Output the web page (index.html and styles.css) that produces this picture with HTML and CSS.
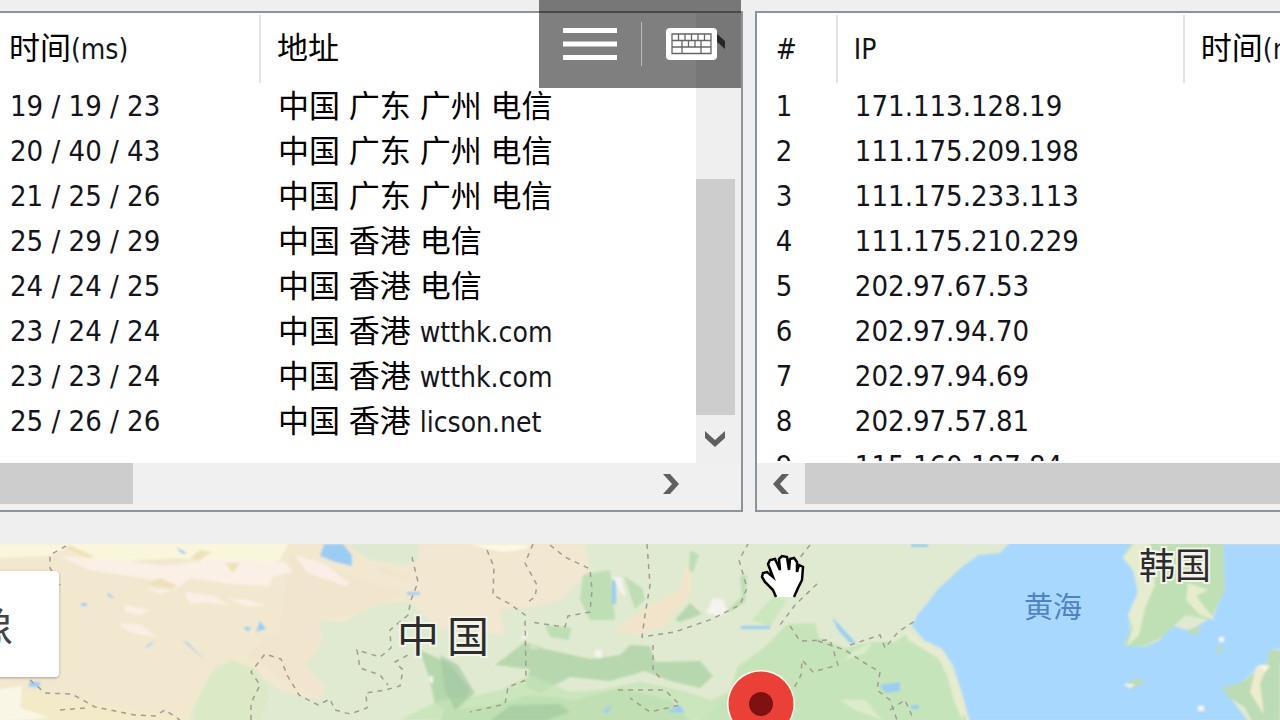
FILE: index.html
```html
<!DOCTYPE html>
<html lang="zh-CN">
<head>
<meta charset="utf-8">
<title>路由追踪</title>
<link rel="stylesheet" href="styles.css">
</head>
<body>
<main class="app">
  <div class="panes">
    <section class="pane pane-left">
      <div class="body">
        <div class="view">
          <table class="list">
            <colgroup><col class="c-time"><col></colgroup>
            <thead><tr><th><span class="cjk">时间</span>(ms)</th><th><span class="cjk">地址</span></th></tr></thead>
            <tbody>
              <tr><td>19 / 19 / 23</td><td class="addr">中国 广东 广州 电信</td></tr>
              <tr><td>20 / 40 / 43</td><td class="addr">中国 广东 广州 电信</td></tr>
              <tr><td>21 / 25 / 26</td><td class="addr">中国 广东 广州 电信</td></tr>
              <tr><td>25 / 29 / 29</td><td class="addr">中国 香港 电信</td></tr>
              <tr><td>24 / 24 / 25</td><td class="addr">中国 香港 电信</td></tr>
              <tr><td>23 / 24 / 24</td><td class="addr">中国 香港 <span class="host">wtthk.com</span></td></tr>
              <tr><td>23 / 23 / 24</td><td class="addr">中国 香港 <span class="host">wtthk.com</span></td></tr>
              <tr><td>25 / 26 / 26</td><td class="addr">中国 香港 <span class="host">licson.net</span></td></tr>
            </tbody>
          </table>
        </div>
        <div class="vbar">
          <button class="step" aria-label="向上"><svg width="20" height="18" viewBox="0 0 20 18"><path d="M0 17V9L10 0 20 9V17L10 8Z" fill="#505050"/></svg></button>
          <div class="vthumb"></div>
          <button class="step" aria-label="向下"><svg width="20" height="18" viewBox="0 0 20 18"><path d="M0 1L10 10 20 1V8L10 17 0 8Z" fill="#606060"/></svg></button>
        </div>
      </div>
      <div class="hbar">
        <div class="hthumb short"></div>
        <button class="step end" aria-label="向右"><svg width="18" height="20" viewBox="0 0 18 20"><path d="M1 0H8L17 10 8 20H1L10 10Z" fill="#606060"/></svg></button>
      </div>
      <div class="remote">
        <button class="tool" aria-label="菜单"><svg width="54" height="32" viewBox="0 0 54 32"><path d="M0 0H54V5H0ZM0 13.500H54V18.500H0ZM0 27H54V32H0Z" fill="#fff"/></svg></button>
        <span class="divider"></span>
        <button class="tool" aria-label="键盘"><svg width="51" height="32" viewBox="0 0 51 32"><rect width="51" height="32" rx="4" fill="#fff"/><path d="M6 6H45V25.500H6ZM6 12.500H45M6 19H45M12.500 6V12.500M19 6V12.500M25.500 6V12.500M32 6V12.500M38.500 6V12.500M16 12.500V19M22.500 12.500V19M29 12.500V19M35 12.500V19M16 19V25.500M35 19V25.500" fill="none" stroke="#666" stroke-width="1.300"/></svg></button>
      </div>
    </section>
    <section class="pane pane-right">
      <div class="body">
        <div class="view">
          <table class="list hops">
            <colgroup><col class="c-num"><col class="c-ip"><col></colgroup>
            <thead><tr><th>#</th><th>IP</th><th><span class="cjk">时间</span>(ms)</th></tr></thead>
            <tbody>
              <tr><td>1</td><td>171.113.128.19</td><td></td></tr>
              <tr><td>2</td><td>111.175.209.198</td><td></td></tr>
              <tr><td>3</td><td>111.175.233.113</td><td></td></tr>
              <tr><td>4</td><td>111.175.210.229</td><td></td></tr>
              <tr><td>5</td><td>202.97.67.53</td><td></td></tr>
              <tr><td>6</td><td>202.97.94.70</td><td></td></tr>
              <tr><td>7</td><td>202.97.94.69</td><td></td></tr>
              <tr><td>8</td><td>202.97.57.81</td><td></td></tr>
              <tr><td>9</td><td>115.160.187.84</td><td></td></tr>
            </tbody>
          </table>
        </div>
      </div>
      <div class="hbar">
        <button class="step start" aria-label="向左"><svg width="18" height="20" viewBox="0 0 18 20"><path d="M17 0H10L1 10 10 20H17L8 10Z" fill="#606060"/></svg></button>
        <div class="hthumb"></div>
      </div>
    </section>
  </div>
  <section class="map">
    <svg class="terrain" viewBox="0 544 1280 176" preserveAspectRatio="xMinYMin slice" role="img" aria-label="地图">
      <defs>
        <filter id="soft" x="-5%" y="-5%" width="110%" height="110%"><feGaussianBlur stdDeviation="1"/></filter>
      </defs>
      <rect y="544" width="1280" height="176" fill="#e0ead0"/>
      <g filter="url(#soft)">
        <path d="M-5 540H350L390 562 420 585 415 600 370 605 345 622 318 620 322 640 305 665 326 690 318 700 280 690 250 670 215 665 210 690 195 705 185 725H-5Z" fill="#f1e8cf"/>
        <path d="M290 555L350 575 400 590 385 602 350 615 318 618 320 645 305 665 326 688 318 698 290 685 262 665 245 655 280 630Z" fill="#f2e5cd"/>
        <path d="M60 540H290L280 560 240 568 180 558 100 562 70 552ZM-5 544H75L50 556-5 558Z" fill="#faf6dc"/>
        <path d="M60 556L120 560 165 566 220 559 285 562 293 572 272 577 270 586 230 584 190 578 175 590 155 580 90 570Z" fill="#fbf0e6"/>
        <path d="M295 555L325 564 350 584 345 586 308 573ZM125 605L150 610 140 615 125 612ZM118 624L140 624 156 637 130 632ZM185 592L215 596 230 606 205 602 190 604ZM228 598L250 600 265 606 245 606ZM145 588L175 590 160 594Z" fill="#fbefe5"/>
        <path d="M70 545L95 557 88 558 65 549ZM200 550L212 552 198 561 190 558ZM225 563H240L233 573ZM160 578L178 586 172 589 145 584Z" fill="#eee2bb"/>
        <path d="M20 690L75 700 200 720H0V705Z" fill="#f3ebc8"/>
        <path d="M-5 690L22 686 20 708 50 718-5 722Z" fill="#faf6e6"/>
        <path d="M210 675L230 660 255 668 270 690 260 725H195V704Z" fill="#dce9c7"/>
        <path d="M390 544H585L590 570 560 600 530 607 500 610 505 635 440 628 418 610 400 590Z" fill="#f2e7d0"/>
        <path d="M470 544H530L525 549 505 552 488 549Z" fill="#fdf8e2"/>
        <path d="M380 567L405 575 412 580 380 573ZM615 630L650 605 680 590 685 570 692 560 690 595 665 625 640 635Z" fill="#f2e4ca"/>
        <path d="M345 544H418V560L405 565 370 560Z" fill="#deead0"/>
        <path d="M583 575L610 570 615 620 590 620 580 600ZM624 576L642 588 645 600 635 609ZM690 550L699 555 693 573 689 570ZM728 610L742 596 740 576 747 575 745 602 730 612ZM545 625L572 628 568 640 550 637Z" fill="#bedeb5"/>
        <path d="M675 620L690 603 702 614 680 622ZM495 665L525 642 545 649 590 659 620 655 630 645 650 646 655 662 700 661 713 676 700 688 670 681 645 671 610 681 570 677 540 693 525 686 530 669Z" fill="#b7d8ae"/>
        <path d="M420 650L450 664 470 690 455 715 435 704 430 680ZM445 710L490 706 530 695 575 700 620 688 670 700 690 721H440Z" fill="#b5d7ad"/>
        <path d="M500 690L530 675 570 692 600 690 640 682 680 690 710 700 735 690 740 720H400L440 700 470 697Z" fill="#c4e3b6" opacity=".75"/>
        <path d="M440 655L458 665 475 693 455 710 445 690ZM510 705L560 704 570 712 545 721H490Z" fill="#a1c8a0" opacity=".65"/>
        <path d="M730 690L738 666 765 647 787 624 815 623 819 638 845 648 872 642 895 642 905 635 940 650 955 690 967 721H700Z" fill="#c6e4ba"/>
        <path d="M752 620L774 596 787 600 770 627Z" fill="#cbe7bd"/>
        <path d="M838 665L855 650 873 642 865 653 845 660ZM840 700H865L882 720 855 710Z" fill="#dceccb"/>
        <path d="M906 629L918 640 942 648 950 667 956 681 965 710 962 720 954 700 947 675 938 658 908 640Z" fill="#e6eccf"/>
        <path d="M1011 542H1132L1123 557 1133 570 1137 590 1138 600 1129 620 1130 635 1124 645 1145 647 1160 640 1170 625 1190 631 1205 621 1213 617 1224 590 1223 544H1285V648L1270 650 1267 662 1252 673 1242 682 1222 688 1230 697 1238 708 1248 721H970L963 696 953 665 942 649 924 640 912 626 918 614 926 605 938 589 948 580 963 566 979 555 1000 553Z" fill="#a9d8ff"/>
        <path d="M1132 542H1223L1225 590 1210 620 1186 615 1162 637 1145 646 1124 646 1131 628 1128 615 1140 588 1133 570 1123 558Z" fill="#bfe0b5"/>
        <path d="M1135 542H1150L1153 562 1155 585 1145 608 1139 635 1127 646 1133 628 1128 615 1140 588 1133 570 1123 558ZM1188 583L1208 590 1196 596 1215 620 1200 615 1186 600Z" fill="#e5edce"/>
        <path d="M1267 662L1280 655V721H1252L1245 707 1228 697 1222 688 1244 681ZM1268 650H1285V662H1268ZM1188 630L1200 626V634H1190ZM1123 685L1138 678 1145 682 1135 688ZM1215 652L1222 640 1220 654Z" fill="#bcdcb5"/>
        <path d="M1256 667L1268 664 1260 684 1264 715 1250 692Z" fill="#eeebcf"/>
        <path d="M1258 665L1270 666 1265 672ZM1219 637H1224V642H1219ZM1123 684H1135L1130 688ZM1198 706H1204V711H1198Z" fill="#faf4e9"/>
        <path d="M324 544H343L352 555V566L335 562 320 556ZM176 547L187 553 182 554ZM243 627H251L248 632ZM260 621L266 629 256 632ZM144 648L155 640 150 646ZM182 640L188 643 206 661ZM407 592H420V595H407ZM741 626H770V629H741ZM612 580H616V604H612ZM832 617L856 643H850L838 630ZM880 685L900 682V691L885 693ZM911 705H919V709H911ZM29 682H40V687H29ZM667 712L680 705 685 713ZM602 711L612 705 608 713ZM81 603H87V606H81ZM107 592L115 598 109 597ZM911 544H928V547H911Z" fill="#9bcdf3"/>
        <path d="M613 577H621L626 597 620 592ZM706 613L713 598 724 600 727 611 720 616ZM520 641L526 630 528 637ZM528 645L540 649 532 648ZM595 650H602V658H595ZM430 676H433V684L429 680Z" fill="#f4f3ed"/>
      </g>
      <g fill="none" stroke="#a39c90" stroke-width="1.500" stroke-dasharray="5 5">
        <path d="M66 546L50 555 50 568 60 585M30 680L45 693 72 694 95 707 135 715 155 716 165 710 180 720M251 720V703L260 685 251 672 265 654 281 659 287 675 299 695 318 705 330 699 335 710 350 714 367 708 366 693 385 690 400 686 403 670 395 662 408 655M412 557L418 582 411 600 408 615 390 630 391 648 380 657 357 650 360 668 380 675 388 685"/>
        <path d="M487 550L494 567 493 595 510 604 525 615 526 680 508 687 505 704 470 712M533 544L525 563 537 585 535 597 525 604M550 545L565 557 590 569 592 590 590 612 568 616 565 627 530 622M647 544L650 585 645 615 642 637 675 632 712 619 740 605 747 588 739 560 748 544M653 645V670L662 680M618 690L665 690 680 705 650 712 630 698"/>
        <path d="M810 545L798 560M817 584L795 605 780 625M790 626L800 641 830 640 838 665 813 672 802 660 801 675 793 690M818 641L845 650 863 662 880 672 877 690 890 700 897 720M850 645L880 635 885 648 898 632 915 621M60 710L85 708M890 710L905 700 912 716"/>
      </g>
      <g class="country">
        <text x="397" y="652" font-size="42">中</text>
        <text x="447" y="652" font-size="42">国</text>
        <text x="1139" y="579" font-size="36">韩国</text>
      </g>
      <text class="sea" x="1024" y="618" font-size="29">黄海</text>
      <circle cx="761" cy="704" r="34" fill="#fff8ee"/>
      <circle cx="761" cy="704" r="32.500" fill="#ea4038"/>
      <circle cx="761" cy="704" r="12" fill="#7f1210"/>
      <path d="M776 597L773 590 765 582 762 577 763 573 767 572 773 577 768 564 770 560 775 559 780 570 779 559 782 556 787 557 789 570 790 559 794 558 797 562V572L799 565 803 567 802 580 798 588 796 597Z" fill="#fff"/>
      <path d="M776 597L773 590 765 582 762 577 763 573 767 572 773 577 768 564 770 560 775 559 780 570 779 559 782 556 787 557 789 570 790 559 794 558 797 562V572L799 565 803 567 802 580 798 588 794 597" fill="none" stroke="#000" stroke-width="2.500"/>
    </svg>
    <button class="layer">像</button>
  </section>
</main>
</body>
</html>
```

FILE: styles.css
```css
* { box-sizing: border-box; }

body {
  margin: 0;
  background: #efefef;
  color: #14141c;
  font: 28px/45px "DejaVu Sans Condensed", "Noto Sans CJK SC", sans-serif;
}

button {
  display: flex;
  align-items: center;
  justify-content: center;
  margin: 0;
  padding: 0;
  border: 0;
  background: transparent;
}

.app {
  display: flex;
  flex-direction: column;
  min-height: 100vh;
  overflow: hidden;
}

.panes {
  position: relative;
  display: grid;
  grid-template-columns: 58fr 41fr;
  gap: 12px;
  padding: 11px 0 32px;
}

.pane {
  display: flex;
  flex-direction: column;
  min-width: 0;
  border: 2px solid #8b939b;
  background: #fff;
}

.pane-left { position: relative; border-left: 0; }
.pane-right { border-right: 0; }

.body { display: flex; height: 450px; }
.view { flex: 1; min-width: 0; padding-top: 2px; overflow: hidden; }
.pane-right .view { margin-bottom: 2px; }

.list {
  width: 100%;
  table-layout: fixed;
  border-collapse: separate;
  border-spacing: 0;
}

.c-time { width: 261px; }
.c-num { width: 81px; }
.c-ip { width: 347px; }

th {
  height: 68px;
  padding: 0 0 0 16px;
  border-right: 2px solid #e4e4e4;
  font-weight: 400;
  text-align: left;
  white-space: nowrap;
}

th:last-child { border-right: 0; }
th:first-child { padding-left: 9px; }

td {
  height: 45px;
  padding: 0 0 0 17px;
  font-size: 29px;
  line-height: 44px;
  white-space: nowrap;
}

td:first-child { padding-left: 10px; }
.hops th:first-child, .hops td:first-child { padding-left: 19px; }

.cjk, .addr {
  color: #000;
  font-size: 31px;
}

.host {
  color: #14141c;
  font-size: 28px;
  line-height: 1;
}

.vbar {
  display: flex;
  flex-direction: column;
  width: 45px;
  padding-right: 6px;
  background: #efefef;
}

.vbar .step { height: 48px; }
.vbar .step:first-child { height: 56px; }
.vthumb { flex: 1; margin-top: 110px; background: #cdcdcd; }

.hbar {
  display: flex;
  height: 47px;
  padding-bottom: 6px;
  background: #f0f0f0;
}

.hthumb { flex: 1; background: #cdcdcd; }
.hthumb.short { flex: none; width: 18%; }
.step.end { width: 40px; margin: 0 50px 0 auto; }
.step.start { width: 48px; }

.remote {
  position: absolute;
  top: -13px;
  right: 0;
  display: flex;
  align-items: center;
  gap: 24px;
  width: 202px;
  height: 88px;
  padding: 0 24px;
  background: rgba(0, 0, 0, 0.5);
}

.divider { width: 1px; height: 44px; background: #bbb; }

.map {
  position: relative;
  flex: 1;
  min-height: 176px;
  overflow: hidden;
}

.terrain { display: block; width: 100%; height: 100%; }

.country, .sea { font-family: "Noto Sans CJK SC", sans-serif; }

.country {
  fill: #2c2c2c;
  stroke: #f3f3ea;
  stroke-width: 4px;
  paint-order: stroke;
}

.sea { fill: #4f82c4; }

.layer {
  position: absolute;
  top: 27px;
  left: -31px;
  justify-content: flex-start;
  width: 90px;
  height: 106px;
  border-radius: 4px;
  background: #fff;
  box-shadow: 0 1px 3px rgba(0, 0, 0, 0.3);
  color: #444;
  font: 44px/1 "Noto Sans CJK SC", sans-serif;
}
```
